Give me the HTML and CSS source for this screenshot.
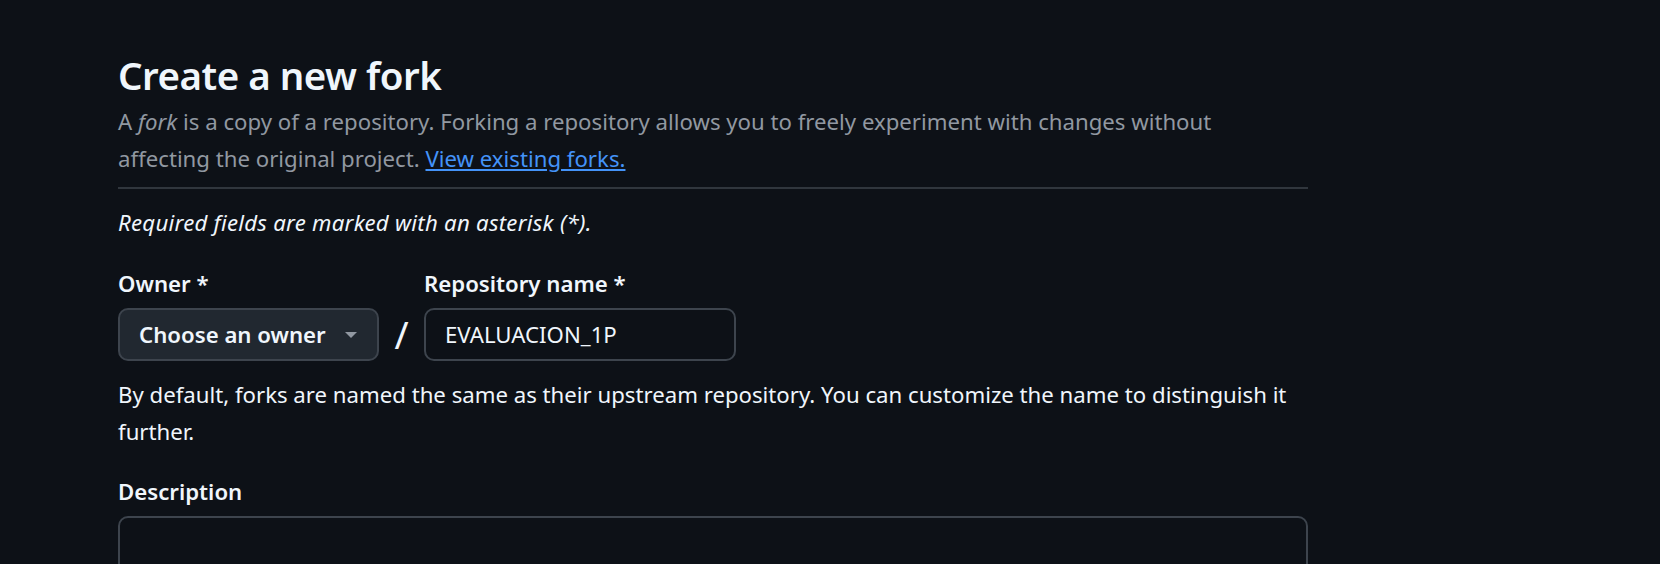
FILE: index.html
```html
<!DOCTYPE html>
<html lang="en">
<head>
<meta charset="utf-8">
<title>Create a new fork</title>
<link rel="stylesheet" href="styles.css">
</head>
<body>
<main class="page">
  <div class="subhead">
    <h1 class="title">Create a new fork</h1>
    <p class="lead">A <em>fork</em> is a copy of a repository. Forking a repository allows you to freely experiment with changes without<br>affecting the original project. <a href="#" class="link">View existing forks.</a></p>
  </div>
  <p class="required">Required fields are marked with an asterisk (*).</p>
  <div class="name-row">
    <div class="field">
      <label class="label">Owner *</label>
      <button class="select" type="button"><span>Choose an owner</span><span class="caret"></span></button>
    </div>
    <span class="slash">/</span>
    <div class="field">
      <label class="label" for="repo">Repository name *</label>
      <input id="repo" class="input" type="text" value="EVALUACION_1P">
    </div>
  </div>
  <p class="note">By default, forks are named the same as their upstream repository. You can customize the name to distinguish it<br>further.</p>
  <div class="field">
    <label class="label label-desc" for="desc">Description</label>
    <textarea id="desc" class="textarea"></textarea>
  </div>
</main>
</body>
</html>
```

FILE: styles.css
```css
html, body { margin: 0; padding: 0; background: #0d1117; }
body { font-family: "Noto Sans", sans-serif; color: #f0f6fc; font-size: 22.2px; line-height: 35px; }
.page { width: 1190px; margin-left: 118px; padding-top: 51px; }
.title { font-size: 38.5px; font-weight: 600; line-height: 48px; letter-spacing: -0.5px; margin: 0; }
.lead { color: #9198a1; line-height: 37px; margin: 4px 0 0; padding-bottom: 10px; border-bottom: 2px solid #30363d; }
.link { color: #4493f8; text-decoration-color: #4493f8; }
.required { font-style: italic; letter-spacing: 0.26px; margin: 16px 0 26px; }
.name-row { display: flex; align-items: flex-end; }
.field { display: flex; flex-direction: column; }
.label { font-weight: 600; margin-bottom: 7px; }
.label-desc { margin-bottom: 7px; }
.select { display: flex; align-items: center; justify-content: space-between; width: 261px; height: 53px; box-sizing: border-box; padding: 0 20px 0 19px; background: #212830; border: 2px solid #3d444d; border-radius: 10px; color: #f0f6fc; font: 600 22.2px "Noto Sans", sans-serif; }
.caret { width: 0; height: 0; border-left: 6px solid transparent; border-right: 6px solid transparent; border-top: 6px solid #9198a1; }
.slash { font-size: 38px; width: 45px; text-align: center; height: 53px; line-height: 53px; }
.input { width: 312px; height: 53px; box-sizing: border-box; padding: 0 19px; background: #0d1117; border: 2px solid #3d444d; border-radius: 10px; color: #f0f6fc; font: 400 22.2px "Noto Sans", sans-serif; }
.note { line-height: 37px; margin: 15px 0 24px; }
.textarea { width: 1190px; height: 120px; box-sizing: border-box; background: #0d1117; border: 2px solid #3d444d; border-radius: 10px; }
```
